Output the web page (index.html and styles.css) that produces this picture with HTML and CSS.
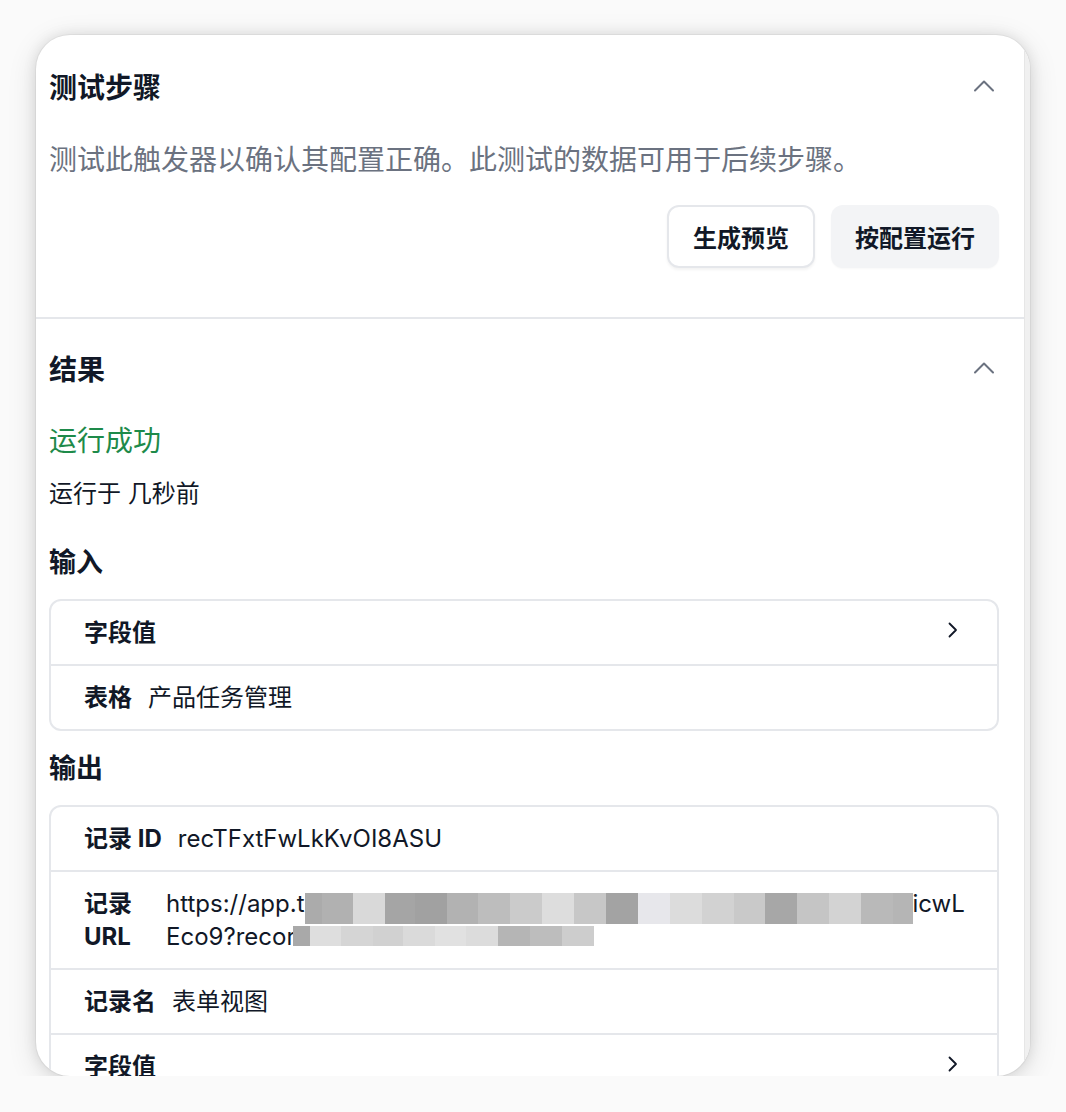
FILE: index.html
```html
<!DOCTYPE html>
<html lang="zh-CN">
<head>
<meta charset="utf-8">
<title>测试步骤</title>
<link rel="stylesheet" href="styles.css">
</head>
<body>
<div class="page">
  <div class="card">
    <div class="panel">
      <section class="section section-test">
        <div class="section-head">
          <h2 class="title">测试步骤</h2>
          <svg class="chev-up" width="22" height="14" viewBox="0 0 22 14" aria-hidden="true"><path d="M2 11.5 L11 2.5 L20 11.5" fill="none" stroke="#6b7280" stroke-width="2" stroke-linecap="round" stroke-linejoin="round"/></svg>
        </div>
        <p class="desc">测试此触发器以确认其配置正确。此测试的数据可用于后续步骤。</p>
        <div class="actions">
          <button class="btn btn-outline">生成预览</button>
          <button class="btn btn-soft">按配置运行</button>
        </div>
      </section>

      <section class="section section-result">
        <div class="section-head">
          <h2 class="title">结果</h2>
          <svg class="chev-up" width="22" height="14" viewBox="0 0 22 14" aria-hidden="true"><path d="M2 11.5 L11 2.5 L20 11.5" fill="none" stroke="#6b7280" stroke-width="2" stroke-linecap="round" stroke-linejoin="round"/></svg>
        </div>
        <div class="status">运行成功</div>
        <div class="ran-at">运行于 几秒前</div>

        <h3 class="sub">输入</h3>
        <div class="table">
          <div class="row">
            <span class="label">字段值</span>
            <svg class="chev-right" width="10" height="16" viewBox="0 0 10 16" aria-hidden="true"><path d="M1.5 1.5 L8 8 L1.5 14.5" fill="none" stroke="#111827" stroke-width="1.8" stroke-linecap="round" stroke-linejoin="round"/></svg>
          </div>
          <div class="row">
            <span class="label">表格</span>
            <span class="value">产品任务管理</span>
          </div>
        </div>

        <h3 class="sub sub-out">输出</h3>
        <div class="table">
          <div class="row">
            <span class="label">记录 ID</span>
            <span class="value">recTFxtFwLkKvOI8ASU</span>
          </div>
          <div class="row">
            <span class="label label-wrap">记录 URL</span>
            <div class="value url">
              <div class="url-line">https://app.t<span class="mosaic mosaic-1"></span>icwL</div>
              <div class="url-line">Eco9?recor<span class="hidden-part">d=recTFxtFwLkKvOI8ASU<span class="mosaic mosaic-2"></span></span></div>
            </div>
          </div>
          <div class="row">
            <span class="label">记录名</span>
            <span class="value">表单视图</span>
          </div>
          <div class="row">
            <span class="label">字段值</span>
            <svg class="chev-right" width="10" height="16" viewBox="0 0 10 16" aria-hidden="true"><path d="M1.5 1.5 L8 8 L1.5 14.5" fill="none" stroke="#111827" stroke-width="1.8" stroke-linecap="round" stroke-linejoin="round"/></svg>
          </div>
        </div>
      </section>
    </div>
    <div class="track"></div>
  </div>
</div>
</body>
</html>
```

FILE: styles.css
```css
* { box-sizing: border-box; }

html, body {
  margin: 0;
  padding: 0;
  background: #fafafa;
}

body {
  font-family: "Inter", "Noto Sans CJK SC", sans-serif;
  color: #111827;
}

.page {
  padding: 35px 36px 0 36px;
}

.card {
  width: 994px;
  height: 1041px;
  background: #ffffff;
  border-radius: 34px;
  overflow: hidden;
  display: flex;
  box-shadow: 0 0 0 1px rgba(0, 0, 0, 0.04), 0 0 14px rgba(0, 0, 0, 0.10), 0 6px 30px rgba(0, 0, 0, 0.12);
}

.panel {
  flex: 1;
  min-width: 0;
  overflow: hidden;
}

.track {
  flex: none;
  width: 6px;
  background: #f0f0f0;
  border-left: 1px solid #e6e6e6;
}

.section {
  padding: 0 25px 0 13px;
}

.section-test {
  padding-top: 33px;
  padding-bottom: 49px;
  border-bottom: 2px solid #e5e7eb;
}

.section-result {
  padding-top: 31px;
}

.section-head {
  display: flex;
  align-items: center;
  justify-content: space-between;
  height: 40px;
}

.title {
  margin: 0;
  font-size: 28px;
  line-height: 40px;
  font-weight: 700;
  color: #111827;
}

.chev-up {
  margin-right: 4px;
  margin-bottom: 5px;
}

.desc {
  margin: 32px 0 0 0;
  font-size: 28px;
  line-height: 40px;
  color: #6b7280;
}

.actions {
  margin-top: 25px;
  display: flex;
  justify-content: flex-end;
  gap: 16px;
}

.btn {
  height: 63px;
  padding: 0 24px;
  border-radius: 12px;
  font-family: "Inter", "Noto Sans CJK SC", sans-serif;
  font-size: 24px;
  font-weight: 700;
  color: #111827;
  cursor: pointer;
}

.btn-outline {
  background: #ffffff;
  border: 2px solid #e5e7eb;
  box-shadow: 0 2px 3px rgba(0, 0, 0, 0.05);
}

.btn-soft {
  background: #f3f4f6;
  border: none;
  box-shadow: 0 1px 2px rgba(0, 0, 0, 0.03);
}

.status {
  margin-top: 31px;
  font-size: 28px;
  line-height: 40px;
  color: #1e8a4a;
}

.ran-at {
  margin-top: 15px;
  font-size: 24px;
  line-height: 36px;
  color: #111827;
}

.sub {
  margin: 31px 0 0 0;
  font-size: 27px;
  line-height: 40px;
  font-weight: 700;
  color: #111827;
}

.sub-out {
  margin-top: 18px;
}

.table {
  margin-top: 16px;
  border: 2px solid #e5e7eb;
  border-radius: 12px;
  overflow: hidden;
}

.row {
  display: flex;
  align-items: center;
  gap: 16px;
  padding: 15px 33px;
  font-size: 24px;
  line-height: 33px;
}

.row + .row {
  border-top: 2px solid #e5e7eb;
}

.label {
  flex: none;
  font-weight: 700;
  color: #111827;
}

.label-wrap {
  width: 66px;
  align-self: flex-start;
}

.value {
  color: #111827;
  min-width: 0;
}

.chev-right {
  margin-left: auto;
  margin-right: 6px;
  margin-bottom: 6px;
}

.url-line {
  white-space: nowrap;
}

.mosaic {
  display: inline-block;
  vertical-align: top;
}

.mosaic-1 {
  width: 608px;
  height: 31px;
  transform: translateY(6px);
  background: linear-gradient(to right,
    #ababab 0 17px,
    #b1b1b1 17px 48px,
    #d9d9d9 48px 80px,
    #a5a5a5 80px 110px,
    #a1a1a1 110px 142px,
    #b2b2b2 142px 173px,
    #bdbdbd 173px 205px,
    #cbcbcb 205px 237px,
    #dddddd 237px 269px,
    #c7c7c7 269px 301px,
    #a3a3a3 301px 333px,
    #e7e7eb 333px 365px,
    #dcdcdc 365px 397px,
    #d2d2d2 397px 429px,
    #c9c9c9 429px 460px,
    #a7a7a7 460px 492px,
    #c5c5c5 492px 524px,
    #d3d3d3 524px 556px,
    #b9b9b9 556px 588px,
    #b5b5b5 588px 608px);
}

.hidden-part {
  position: relative;
  color: #c4c4c4;
}

.mosaic-2 {
  position: absolute;
  left: -2px;
  top: 4px;
  width: 301px;
  height: 20px;
  background: linear-gradient(to right,
    #a9a9a9 0 17px,
    #dedede 17px 48px,
    #d5d5d5 48px 80px,
    #d1d1d1 80px 110px,
    #dadada 110px 142px,
    #e1e1e1 142px 173px,
    #dcdcdc 173px 205px,
    #b5b5b5 205px 237px,
    #bdbdbd 237px 269px,
    #cdcdcd 269px 301px);
}
```
